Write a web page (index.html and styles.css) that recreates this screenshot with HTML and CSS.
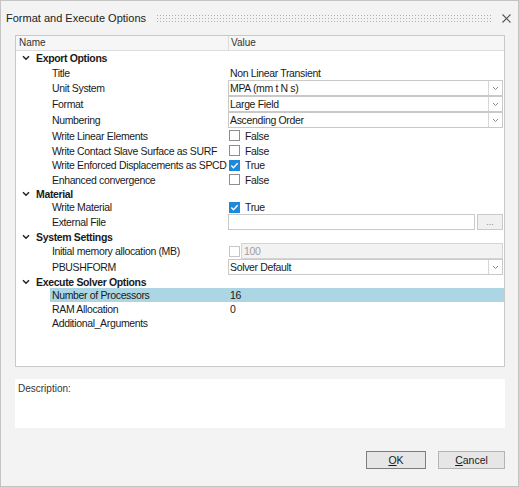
FILE: index.html
```html
<!DOCTYPE html>
<html>
<head>
<meta charset="utf-8">
<link rel="stylesheet" href="styles.css">
</head>
<body>
<div class="window">
  <div class="titlebar">
    <span class="title">Format and Execute Options</span>
    <span class="grip"></span>
    <svg class="close" width="9" height="9" viewBox="0 0 9 9"><path d="M0.5 0.5L8.5 8.5M8.5 0.5L0.5 8.5" stroke="#555" stroke-width="1.1"/></svg>
  </div>
  <div class="panel">
    <div class="header">
      <div class="hname">Name</div>
      <div class="hvalue">Value</div>
    </div>
    <div class="body">
      <div class="row group"><svg class="chev" width="8" height="6" viewBox="0 0 8 6"><path d="M1 1.2L4 4.2L7 1.2" fill="none" stroke="#222" stroke-width="1.5"/></svg><span>Export Options</span></div>
      <div class="row r15"><div class="indent"></div><div class="name">Title</div><div class="value"><span class="txt">Non Linear Transient</span></div></div>
      <div class="row r16"><div class="indent"></div><div class="name">Unit System</div><div class="value"><div class="combo"><span class="ctext">MPA (mm t N s)</span><span class="arrow"><svg width="7" height="5" viewBox="0 0 7 5"><path d="M1 1L3.5 3.5L6 1" fill="none" stroke="#888" stroke-width="1"/></svg></span></div></div></div>
      <div class="row r16"><div class="indent"></div><div class="name">Format</div><div class="value"><div class="combo"><span class="ctext">Large Field</span><span class="arrow"><svg width="7" height="5" viewBox="0 0 7 5"><path d="M1 1L3.5 3.5L6 1" fill="none" stroke="#888" stroke-width="1"/></svg></span></div></div></div>
      <div class="row r16"><div class="indent"></div><div class="name">Numbering</div><div class="value"><div class="combo"><span class="ctext">Ascending Order</span><span class="arrow"><svg width="7" height="5" viewBox="0 0 7 5"><path d="M1 1L3.5 3.5L6 1" fill="none" stroke="#888" stroke-width="1"/></svg></span></div></div></div>
      <div class="row r15"><div class="indent"></div><div class="name">Write Linear Elements</div><div class="value"><span class="cb"></span><span class="cbl">False</span></div></div>
      <div class="row r15"><div class="indent"></div><div class="name">Write Contact Slave Surface as SURF</div><div class="value"><span class="cb"></span><span class="cbl">False</span></div></div>
      <div class="row r14"><div class="indent"></div><div class="name">Write Enforced Displacements as SPCD</div><div class="value"><span class="cb on"><svg width="11" height="11" viewBox="0 0 11 11"><path d="M2.3 5.6L4.4 7.7L8.7 3.2" fill="none" stroke="#fff" stroke-width="1.4"/></svg></span><span class="cbl">True</span></div></div>
      <div class="row r15"><div class="indent"></div><div class="name">Enhanced convergence</div><div class="value"><span class="cb"></span><span class="cbl">False</span></div></div>
      <div class="row group g13"><svg class="chev" width="8" height="6" viewBox="0 0 8 6"><path d="M1 1.2L4 4.2L7 1.2" fill="none" stroke="#222" stroke-width="1.5"/></svg><span>Material</span></div>
      <div class="row r14"><div class="indent"></div><div class="name">Write Material</div><div class="value"><span class="cb on"><svg width="11" height="11" viewBox="0 0 11 11"><path d="M2.3 5.6L4.4 7.7L8.7 3.2" fill="none" stroke="#fff" stroke-width="1.4"/></svg></span><span class="cbl">True</span></div></div>
      <div class="row r16"><div class="indent"></div><div class="name">External File</div><div class="value"><div class="field"></div><div class="browse">...</div></div></div>
      <div class="row group g13"><svg class="chev" width="8" height="6" viewBox="0 0 8 6"><path d="M1 1.2L4 4.2L7 1.2" fill="none" stroke="#222" stroke-width="1.5"/></svg><span>System Settings</span></div>
      <div class="row r16"><div class="indent"></div><div class="name">Initial memory allocation (MB)</div><div class="value"><span class="cb dis"></span><div class="field disabled">100</div></div></div>
      <div class="row r16"><div class="indent"></div><div class="name">PBUSHFORM</div><div class="value"><div class="combo"><span class="ctext">Solver Default</span><span class="arrow"><svg width="7" height="5" viewBox="0 0 7 5"><path d="M1 1L3.5 3.5L6 1" fill="none" stroke="#888" stroke-width="1"/></svg></span></div></div></div>
      <div class="row group g13"><svg class="chev" width="8" height="6" viewBox="0 0 8 6"><path d="M1 1.2L4 4.2L7 1.2" fill="none" stroke="#222" stroke-width="1.5"/></svg><span>Execute Solver Options</span></div>
      <div class="row r14 selected"><div class="indent"></div><div class="name">Number of Processors</div><div class="value"><span class="txt">16</span></div></div>
      <div class="row r14"><div class="indent"></div><div class="name">RAM Allocation</div><div class="value"><span class="txt">0</span></div></div>
      <div class="row r14"><div class="indent"></div><div class="name">Additional_Arguments</div><div class="value"></div></div>
    </div>
  </div>
  <div class="description">Description:</div>
  <div class="buttons">
    <button class="btn ok"><u>O</u>K</button>
    <button class="btn cancel"><u>C</u>ancel</button>
  </div>
</div>
</body>
</html>
```

FILE: styles.css
```css
* { box-sizing: border-box; }
html, body { margin: 0; padding: 0; }
body {
  width: 519px;
  height: 487px;
  background: #f3f3f3;
  font-family: "Liberation Sans", Arial, sans-serif;
  color: #1a1a1a;
}
.window {
  width: 519px;
  height: 487px;
  border: 1px solid #c4c4c4;
  background: #f3f3f3;
  display: flex;
  flex-direction: column;
}
.titlebar {
  height: 34px;
  flex: none;
  display: flex;
  align-items: center;
  padding-left: 5px;
  padding-right: 7px;
}
.title {
  font-size: 11px;
  color: #222;
  white-space: nowrap;
}
.grip {
  flex: 1;
  height: 9px;
  margin: 1px 9px 0 10px;
  background-image: radial-gradient(circle, #b0b0b0 0.7px, transparent 0.9px);
  background-size: 3px 3px;
}
.close { flex: none; }
.panel {
  margin-left: 14px;
  width: 490px;
  height: 332px;
  flex: none;
  border: 1px solid #c8c8c8;
  background: #fff;
  display: flex;
  flex-direction: column;
}
.header {
  height: 15px;
  flex: none;
  display: flex;
  background: #f6f6f6;
  border-bottom: 1px solid #dcdcdc;
  font-size: 10px;
  color: #333;
  line-height: 14px;
}
.hname {
  width: 213px;
  padding-left: 3px;
  border-right: 1px solid #dcdcdc;
}
.hvalue {
  flex: 1;
  padding-left: 2px;
}
.body {
  flex: 1;
  font-size: 10.5px;
  letter-spacing: -0.35px;
}
.row {
  display: flex;
  align-items: center;
}
.r14 { height: 14px; }
.r15 { height: 15px; }
.r16 { height: 16px; }
.group {
  height: 14px;
  font-weight: bold;
  padding-left: 6px;
  gap: 6px;
}
.g13 { height: 13px; }
.indent { width: 34px; flex: none; align-self: stretch; }
.name {
  width: 178px;
  flex: none;
  padding-left: 2px;
  white-space: nowrap;
  align-self: stretch;
  display: flex;
  align-items: center;
}
.value {
  flex: 1;
  align-self: stretch;
  display: flex;
  align-items: center;
  padding-right: 1px;
}
.selected .name, .selected .value { background: #acd6e3; }
.txt { padding-left: 2px; }
.combo {
  flex: 1;
  height: 16px;
  border: 1px solid #c9c9c9;
  display: flex;
  align-items: center;
  background: #fff;
}
.ctext { flex: 1; padding-left: 1px; }
.arrow {
  width: 14px;
  height: 100%;
  border-left: 1px solid #d6d6d6;
  display: flex;
  align-items: center;
  justify-content: center;
}
.cb {
  width: 11px;
  height: 11px;
  margin-left: 1px;
  border: 1px solid #8e8e8e;
  background: #fff;
  flex: none;
  display: flex;
}
.cb svg { margin: -1px; }
.cb.on { background: #1c8ad8; border-color: #1c8ad8; }
.cb.dis { border-color: #c6c6c6; }
.cbl { margin-left: 5px; }
.field {
  height: 16px;
  flex: 1;
  border: 1px solid #c9c9c9;
  background: #fff;
  display: flex;
  align-items: center;
  padding-left: 2px;
}
.field.disabled {
  background: #f2f2f2;
  border-color: #d4d4d4;
  color: #a0a0a0;
  margin-left: 1px;
}
.browse {
  width: 26px;
  height: 16px;
  margin-left: 2px;
  border: 1px solid #c9c9c9;
  background: #f0f0f0;
  color: #888;
  font-size: 9px;
  display: flex;
  align-items: center;
  justify-content: center;
  letter-spacing: 0;
}
.description {
  margin: 12px 0 0 14px;
  width: 490px;
  height: 49px;
  flex: none;
  background: #fff;
  font-size: 10px;
  color: #333;
  padding: 4px 3px;
}
.buttons {
  margin-top: 23px;
  display: flex;
  justify-content: flex-end;
  padding-right: 13px;
  gap: 12px;
}
.btn {
  height: 18px;
  font-family: "Liberation Sans", Arial, sans-serif;
  font-size: 10.5px;
  color: #1a1a1a;
  background: #e6e6e6;
  border: 1px solid #b4b4b4;
  padding: 0;
  line-height: 16px;
}
.btn.ok { width: 60px; border-color: #7d7d7d; }
.btn.cancel { width: 67px; }
```
